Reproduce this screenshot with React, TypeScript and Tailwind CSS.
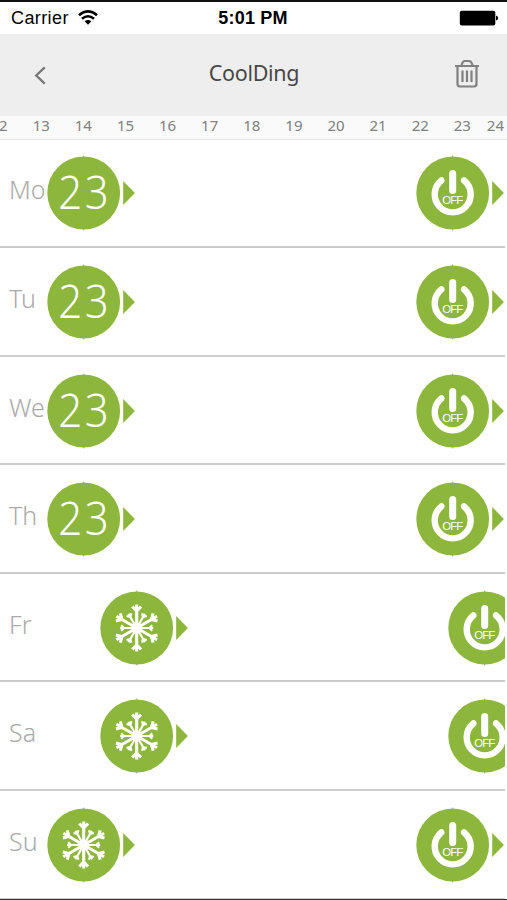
import type { ReactNode } from "react";

type EventKind = "temperature" | "cool" | "off";

interface ScheduleEvent {
  readonly kind: EventKind;
  // left edge of the bubble on the track, in px
  readonly left: number;
}

interface ScheduleDay {
  readonly label: string;
  readonly events: ReadonlyArray<ScheduleEvent>;
}

const HOURS = [13, 14, 15, 16, 17, 18, 19, 20, 21, 22, 23];

const WEEKDAY_EVENTS: ReadonlyArray<ScheduleEvent> = [
  { kind: "temperature", left: 47 },
  { kind: "off", left: 416 },
];

const WEEKEND_EVENTS: ReadonlyArray<ScheduleEvent> = [
  { kind: "cool", left: 100 },
  { kind: "off", left: 448 },
];

const DAYS: ReadonlyArray<ScheduleDay> = [
  { label: "Mo", events: WEEKDAY_EVENTS },
  { label: "Tu", events: WEEKDAY_EVENTS },
  { label: "We", events: WEEKDAY_EVENTS },
  { label: "Th", events: WEEKDAY_EVENTS },
  { label: "Fr", events: WEEKEND_EVENTS },
  { label: "Sa", events: WEEKEND_EVENTS },
  {
    label: "Su",
    events: [
      { kind: "cool", left: 47 },
      { kind: "off", left: 416 },
    ],
  },
];

const ARMS = [0, 60, 120, 180, 240, 300];

function StatusBar() {
  return (
    <div className="grid h-[34px] shrink-0 grid-cols-3 items-center border-t-2 border-[#111] bg-white pr-[8px] pl-[11px] font-['Liberation_Sans',Arial,sans-serif] text-[18px] text-black">
      <div className="flex items-center gap-[9px] pt-px">
        <span className="tracking-[0.4px]">Carrier</span>
        <svg className="mb-[3px] h-[15px] w-[20px]" viewBox="0 0 20 15" fill="none" stroke="currentColor">
          <path d="M1 5.2Q10-2.4 19 5.2" strokeWidth="2.5" />
          <path d="M4 8.7Q10 3.8 16 8.7" strokeWidth="2.5" />
          <path d="M6.6 11.3Q10 8.6 13.4 11.3L10 14.8Z" fill="currentColor" stroke="none" />
        </svg>
      </div>
      <span className="pr-[4px] text-center text-[18px] font-bold tracking-[0.2px]">5:01 PM</span>
      <svg className="h-[16px] w-[40px] justify-self-end" viewBox="0 0 40 16">
        <rect x="0.8" y="0.8" width="35.5" height="14.6" rx="2" />
        <path d="M37 5.5Q39.2 6 39.2 8T37 10.5Z" />
      </svg>
    </div>
  );
}

function NavBar() {
  return (
    <header className="flex h-[82px] shrink-0 items-center justify-between bg-[#eeeeee] pr-[27px] pl-[34px] text-[#484848]">
      <button type="button" aria-label="Back" className="w-[20px] text-[#777]">
        <svg className="h-[19px] w-[12px]" viewBox="0 0 12 20" fill="none" stroke="currentColor" strokeWidth="2.4">
          <path d="M11 1.5L2 10L11 18.5" />
        </svg>
      </button>
      <h1 className="pb-[4px] font-['Noto_Sans',sans-serif] text-[21.5px] tracking-[-0.3px]">CoolDing</h1>
      <button type="button" aria-label="Delete" className="pb-[3px] text-[#808080]">
        <svg className="h-[29px] w-[26px]" viewBox="0 0 26 29" fill="none" stroke="currentColor" strokeWidth="2.2">
          <path d="M1 7H25M7.5 6.5Q8.5 2 11 2H15Q17.5 2 18.5 6.5" />
          <path d="M3.5 7V25Q3.5 27.5 6 27.5H20Q22.5 27.5 22.5 25V7" />
          <path d="M8.5 11.5V23M13 11.5V23M17.5 11.5V23" />
        </svg>
      </button>
    </header>
  );
}

function HourScale() {
  return (
    <div className="flex h-[24px] shrink-0 border-b border-[#e6e6e6] bg-[#fafafa] font-['Noto_Sans',sans-serif] text-[15px] leading-[19px] text-[#808080]">
      {/* 12 is half scrolled out, only its last digit is left */}
      <span className="-ml-px w-[21.2px] shrink-0">2</span>
      {HOURS.map((hour) => (
        <span key={hour} className="w-[42.12px] shrink-0 text-center">
          {hour}
        </span>
      ))}
      <span className="w-[24px] shrink-0 text-center">24</span>
    </div>
  );
}

function Snowflake() {
  return (
    <g fill="none" stroke="#fff">
      {ARMS.map((angle) => (
        <g key={angle} transform={`rotate(${angle})`}>
          <path d="M0 0V-23.5M-4.4-21.5L0-17L4.4-21.5" strokeWidth="3.1" />
          <g transform="rotate(30)">
            <path d="M0 0V-16.5M-2.8-15.5L0-12.7L2.8-15.5" strokeWidth="2.2" />
          </g>
        </g>
      ))}
      <circle r="5.5" fill="#fff" stroke="none" />
    </g>
  );
}

function PowerOff() {
  return (
    <g>
      <path d="M-11.4-12.6A18 18 0 1 0 11.4-12.6" fill="none" stroke="#fff" strokeWidth="6.4" strokeLinecap="round" />
      <path d="M0-19.5V-2.5" stroke="#fff" strokeWidth="7" strokeLinecap="round" />
      <text
        y="11"
        textAnchor="middle"
        className="fill-white font-['Liberation_Sans',sans-serif] text-[11.5px]"
        stroke="#8db63c"
        strokeWidth="1"
        paintOrder="stroke"
        textLength="21"
      >
        OFF
      </text>
    </g>
  );
}

const GLYPHS: Record<EventKind, ReactNode> = {
  temperature: (
    <text
      y="15.5"
      textAnchor="middle"
      transform="scale(0.9 1)"
      className="fill-white font-['Noto_Sans',sans-serif] text-[46.5px] font-light"
    >
      <tspan x="-15">2</tspan>
      <tspan x="14.5">3</tspan>
    </text>
  ),
  cool: <Snowflake />,
  off: <PowerOff />,
};

function EventBubble({ kind, left }: ScheduleEvent) {
  return (
    <svg className="absolute top-[15px] h-[78px] w-[90px]" style={{ left }} viewBox="-36.7 -39 90 78">
      <path d="M0-37.5V37.5" stroke="#aaa" strokeWidth="1" />
      <circle r="36.4" fill="#8db63c" />
      {GLYPHS[kind]}
      <path d="M39.5-12V12L51.2 0Z" fill="#8db63c" />
    </svg>
  );
}

function DayRow({ label, events }: ScheduleDay) {
  return (
    <div className="relative h-[108.67px] w-[505px] shrink-0 overflow-hidden border-b-2 border-[#cccccc] pt-[32px] pl-[9px]">
      <span className="block font-['Noto_Sans',sans-serif] text-[25px] leading-[36px] font-light text-[#aaa]">
        {label}
      </span>
      {events.map((event) => (
        <EventBubble key={event.left} {...event} />
      ))}
    </div>
  );
}

export default function App() {
  return (
    <div className="flex h-[900px] w-[507px] flex-col overflow-hidden border-b border-[#333] bg-white">
      <StatusBar />
      <NavBar />
      <HourScale />
      <main className="-mt-[0.8px] flex h-[760px] shrink-0 flex-col overflow-hidden">
        {DAYS.map((day) => (
          <DayRow key={day.label} {...day} />
        ))}
      </main>
    </div>
  );
}
